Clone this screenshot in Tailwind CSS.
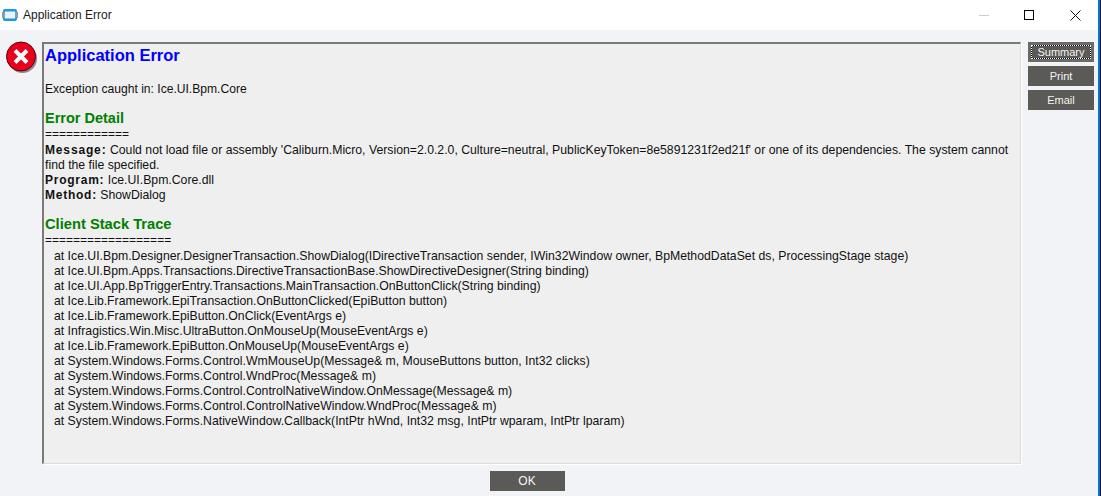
<!DOCTYPE html>
<html lang="en">
<head>
    <meta charset="UTF-8">
    <title>Application Error</title>
    <script src="https://cdn.jsdelivr.net/npm/@tailwindcss/browser@4"></script>
</head>
<body class="bg-[#f2f3f6] font-['Liberation_Sans',Arial,sans-serif] overflow-hidden">
    <div class="w-[1101px] h-[496px] flex">
        <div class="flex-1 flex flex-col">
            <!-- title bar -->
            <div class="h-[30px] bg-white flex items-center pl-[2px]">
                <svg width="16" height="12" viewBox="0 0 16 12" class="mr-[5px]">
                    <rect x="1" y="0" width="14" height="12" rx="2" fill="#1e9ad6"/>
                    <rect x="0" y="3" width="16" height="6" fill="#7f9fb3"/>
                    <rect x="3" y="2.5" width="10" height="7" fill="#e6f4fb"/>
                </svg>
                <span class="text-[12px] text-[#1a1a1a]">Application Error</span>
                <div class="ml-auto flex items-center">
                    <div class="w-[10px] h-px bg-[#cfcfcf] mr-[35px]"></div>
                    <div class="w-[10px] h-[10px] border border-black mr-[36px]"></div>
                    <svg width="11" height="11" viewBox="0 0 11 11" class="mr-[17px]">
                        <path d="M0.5 0.5 L10.5 10.5 M10.5 0.5 L0.5 10.5" stroke="#111" stroke-width="1" fill="none"/>
                    </svg>
                </div>
            </div>
            <!-- body -->
            <div class="flex-1 flex">
                <div class="w-[42px] shrink-0 pt-[11px] pl-[6px]">
                    <svg width="32" height="33" viewBox="0 0 32 33">
                        <circle cx="16.5" cy="17.5" r="14.5" fill="#8a8a8a"/>
                        <circle cx="15" cy="15.5" r="14.5" fill="#e8001c" stroke="#5a0010" stroke-width="1"/>
                        <path d="M9 9.5 L21 21.5 M21 9.5 L9 21.5" stroke="#fff" stroke-width="4" fill="none"/>
                    </svg>
                </div>
                <div class="flex flex-col">
                    <div class="w-[979px] h-[422px] mt-[12px] bg-[#efefef] border-t-2 border-l-2 border-t-[#7a7a7a] border-l-[#7a7a7a] border-b border-r border-b-[#dcdcdc] border-r-[#dcdcdc] shadow-[1px_1px_0_#fff] pl-[1px] pr-[4px] text-[12px] leading-[15px] text-[#111]">
                        <h1 class="text-[16.5px] leading-[20px] font-bold text-[#0000ff] mt-[1px] mb-[17px]">Application Error</h1>
                        <p class="mb-[13px] text-[12.1px]">Exception caught in: Ice.UI.Bpm.Core</p>
                        <h2 class="text-[14.5px] leading-[17px] font-bold text-[#008000]">Error Detail</h2>
                        <p class="mb-[1px]">============</p>
                        <div class="text-[12.25px]">
                            <p><b class="text-[12px] tracking-[0.85px]">Message:</b> Could not load file or assembly 'Caliburn.Micro, Version=2.0.2.0, Culture=neutral, PublicKeyToken=8e5891231f2ed21f' or one of its dependencies. The system cannot</p>
                            <p>find the file specified.</p>
                            <p><b class="text-[12px] tracking-[0.75px]">Program:</b> Ice.UI.Bpm.Core.dll</p>
                            <p><b class="text-[12px] tracking-[0.75px]">Method:</b> ShowDialog</p>
                        </div>
                        <h2 class="text-[14.7px] leading-[17px] font-bold text-[#008000] mt-[13px]">Client Stack Trace</h2>
                        <p>==================</p>
                        <div class="pl-[9px] mt-[1px] text-[12.25px]">
                            <p>at Ice.UI.Bpm.Designer.DesignerTransaction.ShowDialog(IDirectiveTransaction sender, IWin32Window owner, BpMethodDataSet ds, ProcessingStage stage)</p>
                            <p>at Ice.UI.Bpm.Apps.Transactions.DirectiveTransactionBase.ShowDirectiveDesigner(String binding)</p>
                            <p>at Ice.UI.App.BpTriggerEntry.Transactions.MainTransaction.OnButtonClick(String binding)</p>
                            <p>at Ice.Lib.Framework.EpiTransaction.OnButtonClicked(EpiButton button)</p>
                            <p>at Ice.Lib.Framework.EpiButton.OnClick(EventArgs e)</p>
                            <p>at Infragistics.Win.Misc.UltraButton.OnMouseUp(MouseEventArgs e)</p>
                            <p>at Ice.Lib.Framework.EpiButton.OnMouseUp(MouseEventArgs e)</p>
                            <p>at System.Windows.Forms.Control.WmMouseUp(Message&amp; m, MouseButtons button, Int32 clicks)</p>
                            <p>at System.Windows.Forms.Control.WndProc(Message&amp; m)</p>
                            <p>at System.Windows.Forms.Control.ControlNativeWindow.OnMessage(Message&amp; m)</p>
                            <p>at System.Windows.Forms.Control.ControlNativeWindow.WndProc(Message&amp; m)</p>
                            <p>at System.Windows.Forms.NativeWindow.Callback(IntPtr hWnd, Int32 msg, IntPtr wparam, IntPtr lparam)</p>
                        </div>
                    </div>
                    <div class="flex justify-center mt-[7px] pr-[9px]">
                        <button class="w-[75px] h-[20px] bg-[#5b5a57] text-[#f4f4f4] text-[12px]">OK</button>
                    </div>
                </div>
                <div class="ml-[7px] mt-[12px] flex flex-col gap-[4px]">
                    <button class="w-[66px] h-[20px] bg-[#6a6a68] p-[3px] text-[#f4f4f4] text-[11px] leading-[12px]">
                        <span class="block h-full border border-dotted border-white bg-black"><span class="block h-full bg-[#5b5a57]">Summary</span></span>
                    </button>
                    <button class="w-[66px] h-[20px] bg-[#5b5a57] text-[#f4f4f4] text-[11px]">Print</button>
                    <button class="w-[66px] h-[20px] bg-[#5b5a57] text-[#f4f4f4] text-[11px]">Email</button>
                </div>
            </div>
        </div>
        <!-- window edge -->
        <div class="w-[2px] bg-[#0078d7]"></div>
        <div class="w-[1px] bg-[#2a1020]"></div>
    </div>
</body>
</html>
